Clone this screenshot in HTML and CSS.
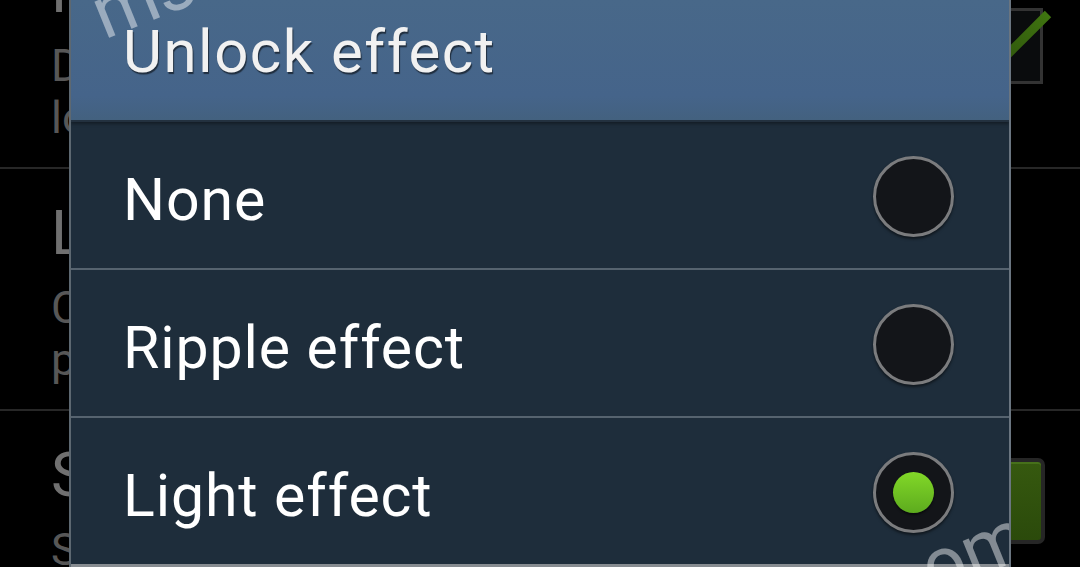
FILE: index.html
```html
<!DOCTYPE html>
<html>
<head>
<meta charset="utf-8">
<link rel="stylesheet" href="styles.css">
</head>
<body>
<div class="screen">
  <div class="settings">
    <div class="item item-first">
      <div class="texts">
        <div class="title">Multiple widgets</div>
        <div class="summary">Display multiple widgets on the<br>lock screen</div>
      </div>
      <div class="checkbox">
        <svg class="check" width="90" height="70" viewBox="0 0 90 70">
          <defs>
            <linearGradient id="cg" x1="0" y1="1" x2="1" y2="0">
              <stop offset="0" stop-color="#2f560c"/>
              <stop offset="1" stop-color="#3f7410"/>
            </linearGradient>
          </defs>
          <line x1="30" y1="51" x2="78" y2="3" stroke="url(#cg)" stroke-width="9"/>
        </svg>
      </div>
    </div>
    <div class="item">
      <div class="texts">
        <div class="title">Lock screen widgets</div>
        <div class="summary">Clock or personal message, favourite<br>pictures</div>
      </div>
    </div>
    <div class="item item-last">
      <div class="texts">
        <div class="title">Shortcuts</div>
        <div class="summary">Set shortcuts on lock screen</div>
      </div>
      <div class="toggle"></div>
    </div>
  </div>

  <div class="dialog">
    <div class="dialog-header">
      <span class="dialog-title">Unlock effect</span>
    </div>
    <div class="options">
      <div class="option">
        <span class="label">None</span>
        <span class="radio"></span>
      </div>
      <div class="option">
        <span class="label">Ripple effect</span>
        <span class="radio"></span>
      </div>
      <div class="option">
        <span class="label">Light effect</span>
        <span class="radio radio-on"><span class="dot"></span></span>
      </div>
    </div>
    <div class="dialog-bottom"></div>
    <span class="watermark wm-top">ms</span>
    <span class="watermark wm-bottom">om</span>
  </div>
</div>
</body>
</html>
```

FILE: styles.css
```css
html, body {
  margin: 0;
  padding: 0;
  background: #000;
  overflow: hidden;
}

.screen {
  position: relative;
  width: 1080px;
  height: 567px;
  overflow: hidden;
  background: #000;
  font-family: Roboto, "Noto Sans", "Liberation Sans", sans-serif;
}

/* background settings list */
.settings {
  display: flex;
  flex-direction: column;
  margin-top: -73px;
}

.item {
  display: flex;
  align-items: center;
  padding: 28px 0 23px 51px;
  border-bottom: 2px solid #272727;
}

.item-last {
  align-items: flex-start;
  border-bottom: none;
}

.texts {
  flex: 1;
  white-space: nowrap;
}

.title {
  font-size: 62px;
  line-height: 72px;
  color: #707070;
}

.summary {
  margin-top: 13px;
  font-size: 45px;
  line-height: 52px;
  color: #575757;
}

.checkbox {
  position: relative;
  width: 70px;
  height: 70px;
  margin-right: 37px;
  margin-bottom: 7px;
  border: 3px solid #333;
  background: #0a0c0d;
}

.check {
  position: absolute;
  left: 0;
  top: 0;
  overflow: visible;
}

.toggle {
  width: 80px;
  height: 78px;
  margin-top: 19px;
  margin-right: 35px;
  border: 4px solid #262626;
  border-radius: 7px;
  background: linear-gradient(#36590f, #2b4a0b);
  box-shadow: inset 0 2px 0 #46701a;
}

/* dialog overlay */
.dialog {
  position: absolute;
  left: 69px;
  top: 0;
  width: 938px;
  height: 567px;
  border-left: 2px solid #5d6871;
  border-right: 2px solid #6a7580;
  display: flex;
  flex-direction: column;
  overflow: hidden;
  background: #1e2d3b;
}

.dialog-header {
  height: 122px;
  flex: none;
  box-sizing: border-box;
  background: linear-gradient(#486889, #45648a 80%, #43617f);
  border-bottom: 2px solid #23313f;
  box-shadow: 0 2px 3px rgba(0, 0, 0, 0.35);
  padding-left: 52px;
  position: relative;
  z-index: 1;
}

.dialog-title {
  display: block;
  padding-top: 17px;
  font-size: 60px;
  line-height: 70px;
  letter-spacing: 1.5px;
  color: #f1f1f1;
  text-shadow: 1px 2px 1px rgba(0, 0, 0, 0.55);
}

.options {
  display: flex;
  flex-direction: column;
}

.option {
  height: 146px;
  display: flex;
  align-items: center;
  justify-content: space-between;
  padding: 0 55px 0 52px;
  border-bottom: 2px solid #56636f;
}

.option:last-child {
  border-bottom: none;
}

.label {
  font-size: 59px;
  line-height: 59px;
  letter-spacing: 0.9px;
  padding-top: 9px;
  color: #ffffff;
}

.radio {
  width: 81px;
  height: 81px;
  margin-top: 2px;
  box-sizing: border-box;
  border: 3px solid #7b7c7e;
  border-radius: 50%;
  background: #131519;
  box-shadow: 0 2px 3px rgba(0, 0, 0, 0.55);
  display: flex;
  align-items: center;
  justify-content: center;
}

.dot {
  width: 41px;
  height: 41px;
  border-radius: 50%;
  background: linear-gradient(#82d828, #5dab1e);
  box-shadow: 0 2px 2px rgba(0, 0, 0, 0.5);
}

.dialog-bottom {
  flex: 1;
  background: #878c91;
}

.watermark {
  position: absolute;
  font-size: 74px;
  font-weight: 400;
  color: rgba(255, 255, 255, 0.45);
  transform: rotate(-22deg);
  transform-origin: left bottom;
  white-space: nowrap;
  line-height: 1;
  z-index: 2;
}

.wm-top {
  left: 38px;
  top: -23px;
}

.wm-bottom {
  left: 867px;
  top: 532px;
}
```
